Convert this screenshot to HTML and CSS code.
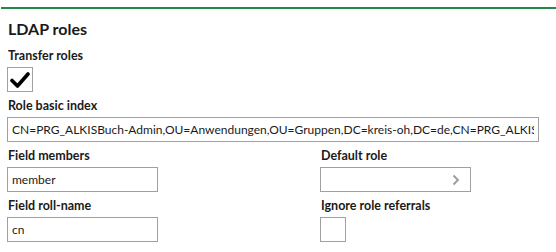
FILE: index.html
```html
<!DOCTYPE html>
<html lang="en">
<head>
    <meta charset="UTF-8">
    <title>LDAP roles</title>
    <link rel="stylesheet" href="styles.css">
</head>
<body>
    <div class="panel">
        <h2 class="panel-title">LDAP roles</h2>
        <div class="field">
            <label class="field-label">Transfer roles</label>
            <div class="check is-checked">
                <svg width="20" height="18" viewBox="0 0 20 18"><path d="M2 9.5 L7.5 15 L18 3" fill="none" stroke="#000" stroke-width="3.6" stroke-linecap="round" stroke-linejoin="round"/></svg>
            </div>
        </div>
        <div class="field">
            <label class="field-label">Role basic index</label>
            <input class="text-input" type="text" value="CN=PRG_ALKISBuch-Admin,OU=Anwendungen,OU=Gruppen,DC=kreis-oh,DC=de,CN=PRG_ALKISBuch-User,OU=Anwendungen">
        </div>
        <div class="cols">
            <div class="col">
                <div class="field">
                    <label class="field-label">Field members</label>
                    <input class="text-input short" type="text" value="member">
                </div>
                <div class="field">
                    <label class="field-label">Field roll-name</label>
                    <input class="text-input short" type="text" value="cn">
                </div>
            </div>
            <div class="col">
                <div class="field">
                    <label class="field-label">Default role</label>
                    <div class="select">
                        <svg width="8" height="12" viewBox="0 0 8 12"><path d="M1.5 1.5 L6 6 L1.5 10.5" fill="none" stroke="#9a9a9a" stroke-width="1.8"/></svg>
                    </div>
                </div>
                <div class="field">
                    <label class="field-label">Ignore role referrals</label>
                    <div class="check"></div>
                </div>
            </div>
        </div>
    </div>
</body>
</html>
```

FILE: styles.css
```css
*{
    margin: 0;
    padding: 0;
    box-sizing: border-box;
}
body{
    font-family: Lato, "Liberation Sans", sans-serif;
    color: #1a1a1a;
    background: #fff;
}
.panel{
    margin: 7px 0 0 1px;
    border-top: 2px solid #1e8a46;
    padding: 0 17px 0 6px;
}
.panel-title{
    font-size: 16px;
    font-weight: bold;
    line-height: 20px;
    margin-top: 10px;
    margin-left: 1px;
    margin-bottom: 9px;
}
.field{
    margin-top: 6px;
}
.field-label{
    display: block;
    font-size: 12.5px;
    font-weight: bold;
    line-height: 16px;
    margin-bottom: 3px;
    padding-left: 1px;
}
.text-input{
    display: block;
    width: 532px;
    height: 25px;
    border: 1px solid #a0a0a0;
    padding: 0 4px;
    font-family: inherit;
    font-size: 12px;
    color: #1a1a1a;
    outline: none;
    background: #fff;
}
.text-input.short{
    width: 151px;
}
.check{
    width: 26px;
    height: 25px;
    border: 1px solid #a0a0a0;
    display: flex;
    align-items: center;
    justify-content: center;
}
.cols{
    display: grid;
    grid-template-columns: 313px 151px;
}
.select{
    width: 151px;
    height: 25px;
    border: 1px solid #a0a0a0;
    display: flex;
    align-items: center;
    justify-content: flex-end;
    padding-right: 10px;
}
```
